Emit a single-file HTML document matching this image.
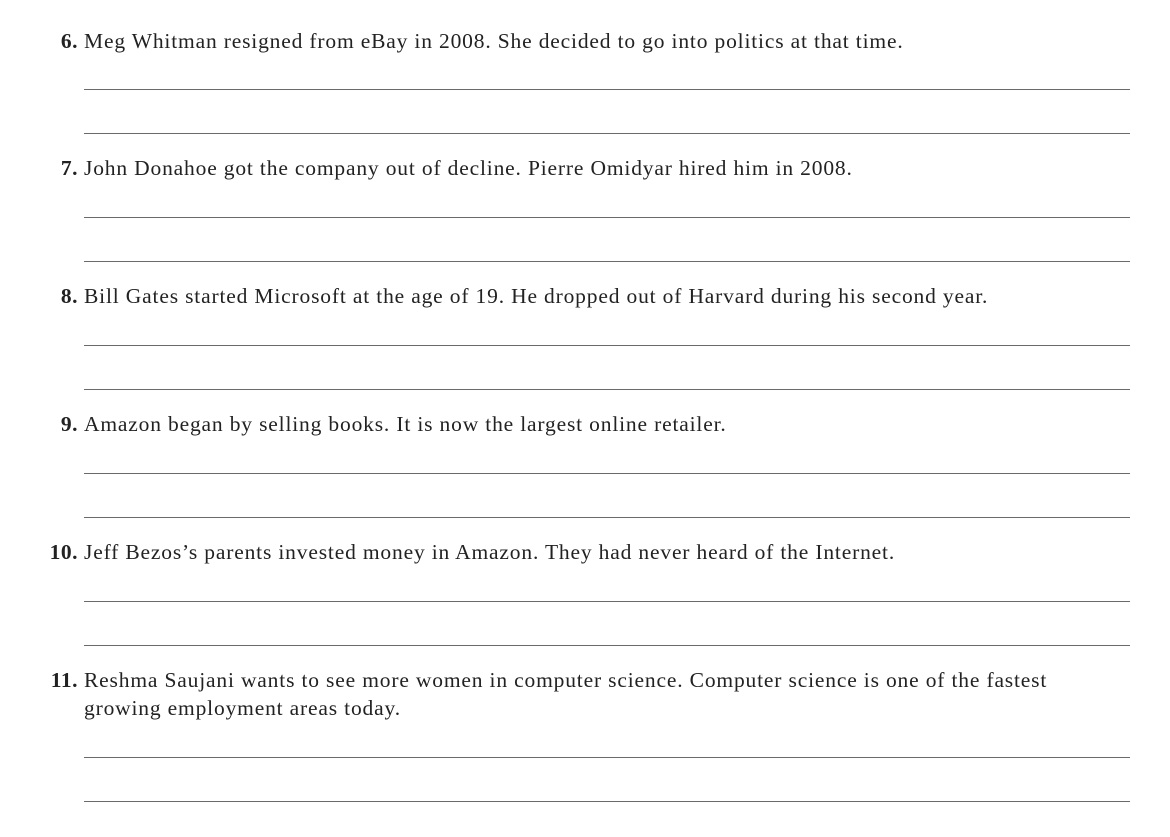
<!DOCTYPE html>
<html><head><style>
body{margin:0;width:1170px;height:837px;background:#fff;position:relative;font-family:"Liberation Serif",serif;color:#222;overflow:hidden}
.t{position:absolute;left:84px;font-size:21.5px;line-height:28px;width:1000px;letter-spacing:0.83px}
.n{position:absolute;right:1092px;font-weight:bold;font-size:21.5px;line-height:28px;letter-spacing:0.5px}
.l{position:absolute;left:84px;width:1046px;height:0;border-top:1.5px solid #6a6a6a}
</style></head><body>
<div class="n" style="top:27px">6.</div><div class="t" style="top:27px">Meg Whitman resigned from eBay in 2008. She decided to go into politics at that time.</div>
<div class="l" style="top:89px"></div><div class="l" style="top:133px"></div>
<div class="n" style="top:154px">7.</div><div class="t" style="top:154px">John Donahoe got the company out of decline. Pierre Omidyar hired him in 2008.</div>
<div class="l" style="top:217px"></div><div class="l" style="top:261px"></div>
<div class="n" style="top:282px">8.</div><div class="t" style="top:282px">Bill Gates started Microsoft at the age of 19. He dropped out of Harvard during his second year.</div>
<div class="l" style="top:345px"></div><div class="l" style="top:389px"></div>
<div class="n" style="top:410px">9.</div><div class="t" style="top:410px">Amazon began by selling books. It is now the largest online retailer.</div>
<div class="l" style="top:473px"></div><div class="l" style="top:517px"></div>
<div class="n" style="top:538px">10.</div><div class="t" style="top:538px">Jeff Bezos’s parents invested money in Amazon. They had never heard of the Internet.</div>
<div class="l" style="top:601px"></div><div class="l" style="top:645px"></div>
<div class="n" style="top:666px">11.</div><div class="t" style="top:666px">Reshma Saujani wants to see more women in computer science. Computer science is one of the fastest<br>growing employment areas today.</div>
<div class="l" style="top:757px"></div><div class="l" style="top:801px"></div>
</body></html>
